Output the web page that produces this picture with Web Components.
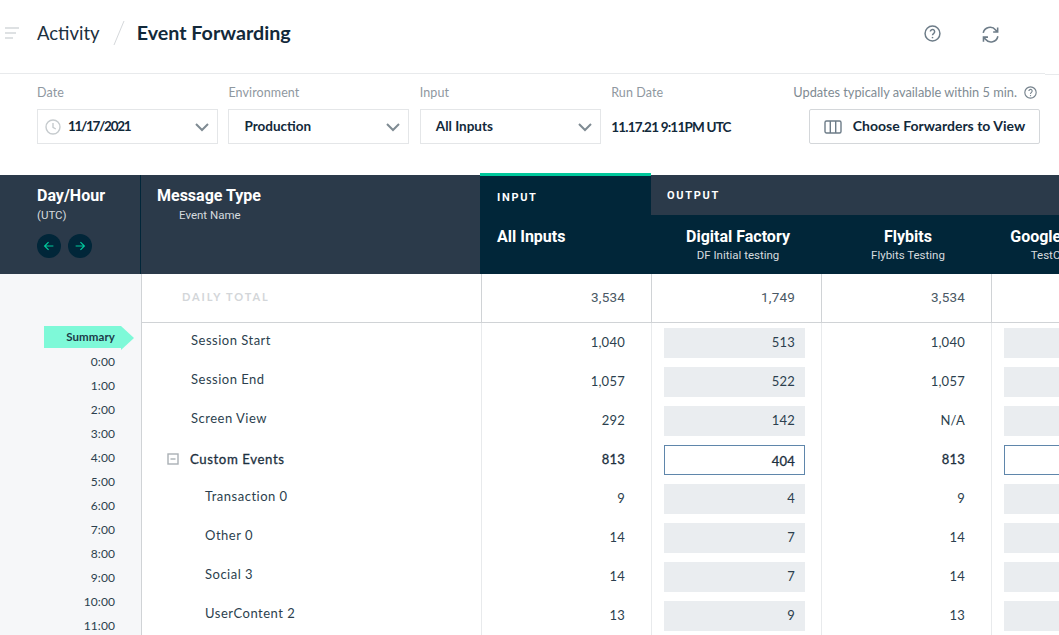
<!DOCTYPE html>
<html>
  <head>
    <style>
      html, body {
        margin: 0;
        height: 100%;
        overflow: hidden;
        background: #fff;
        color: #1c3040;
        font-family: "Lato", "Liberation Sans", sans-serif;
      }
    </style>
  </head>

  <body>
    <activity-page></activity-page>

    <script>
      // Small helper, every element has the same constructor shape
      const define = (name, html, onConnect) => {
        customElements.define(name, class extends HTMLElement {
          constructor() {
            super();
            this.attachShadow({ mode: "open" });
            this.shadowRoot.innerHTML = html;
          }
          connectedCallback() {
            if (onConnect) onConnect(this);
          }
        });
      };

      const ICONS = {
        menu: '<path d="M0 2h14M0 7h11M0 12h8" stroke-width="1.6"/>',
        help: '<circle cx="8" cy="8" r="7"/><path d="M6 6.2a2 2 0 1 1 3.2 1.6c-.8.6-1.2 1-1.2 1.9"/><path d="M8 11.2v1.3"/>',
        refresh: '<path d="M2 7a6.2 6.2 0 0 1 11-2.6l1.6 1.8M14.8 2.2v4h-4"/><path d="M15 10a6.2 6.2 0 0 1-11 2.6l-1.6-1.8M2.2 14.8v-4h4"/>',
        clock: '<circle cx="8" cy="8" r="7"/><path d="M8 4v4.4l2.8 1.6"/>',
        chevron: '<path d="M2 5l6 6 6-6" stroke-width="2"/>',
        columns: '<rect x="1" y="2" width="16" height="12" rx="1.5"/><path d="M6.3 2v12M11.7 2v12"/>',
        left: '<path d="M13 8H3M7.5 3.5L3 8l4.5 4.5"/>',
        right: '<path d="M3 8h10M8.5 3.5L13 8l-4.5 4.5"/>',
        minus: '<rect x="1" y="1" width="10" height="10"/><path d="M3.5 6h5"/>'
      };

      define("ui-icon", `
        <style>
          :host { display: inline-flex; line-height: 0; }
          svg { fill: none; stroke: currentColor; stroke-width: 1.4; width: 100%; height: 100%; }
        </style>
        <svg></svg>
      `, (el) => {
        const svg = el.shadowRoot.querySelector("svg");
        const size = el.getAttribute("box") || "0 0 16 16";
        svg.setAttribute("viewBox", size);
        svg.innerHTML = ICONS[el.getAttribute("name")];
      });

      define("top-bar", `
        <style>
          :host {
            position: relative;
            display: flex;
            align-items: center;
            height: 74px;
            box-sizing: border-box;
            padding-left: 5px;
            padding-bottom: 9px;
          }
          /* the rule steps down a little at the far right */
          :host::before, :host::after { content: ""; position: absolute; height: 1px; background: #e8eaec; }
          :host::before { left: 0; right: 14px; bottom: 0; }
          :host::after { right: 0; width: 14px; bottom: -1px; }
          .menu { width: 14px; height: 14px; color: #d3d7da; margin: 0 18px 0 0; }
          .crumb { font-size: 18.5px; color: #1c3040; }
          .slash { width: 12px; height: 26px; margin: 0 12px 0 13px; stroke: #d5d8db; fill: none; flex: none; }
          .title { font-size: 19.7px; font-weight: 700; color: #12293a; flex: 1; }
          .tool { width: 17px; height: 17px; color: #6d7c88; margin-top: 2px; }
          .help { margin-right: 40px; }
          .refresh { width: 18px; height: 18px; margin-right: 60px; }
        </style>
        <ui-icon class="menu" name="menu" box="0 0 14 14"></ui-icon>
        <span class="crumb">Activity</span>
        <svg class="slash" viewBox="0 0 12 26"><path d="M11 1L1 25"/></svg>
        <span class="title">Event Forwarding</span>
        <ui-icon class="tool help" name="help"></ui-icon>
        <ui-icon class="tool refresh" name="refresh"></ui-icon>
      `);

      define("filter-field", `
        <style>
          :host { display: flex; flex-direction: column; gap: 8px; width: 181px; }
          .label { font-size: 12.5px; line-height: 17px; color: #8f989f; letter-spacing: 0.1px; }
        </style>
        <span class="label"></span>
        <slot></slot>
      `, (el) => {
        el.shadowRoot.querySelector(".label").textContent = el.getAttribute("label");
      });

      define("select-box", `
        <style>
          :host {
            display: flex;
            align-items: center;
            height: 35px;
            box-sizing: border-box;
            border: 1px solid #e4e6e8;
            padding: 0 7px 0 15px;
            font-size: 13.5px;
            font-weight: 700;
            color: #12293a;
          }
          ::slotted(ui-icon) { width: 16px; height: 16px; color: #c6cbce; margin: 0 7px 0 -8px; }
          .text { flex: 1; padding-bottom: 2px; }
          .chev { width: 16px; height: 16px; color: #7f8b93; }
        </style>
        <slot name="icon"></slot>
        <span class="text"><slot></slot></span>
        <ui-icon class="chev" name="chevron"></ui-icon>
      `);

      define("forwarder-action", `
        <style>
          :host { display: flex; flex-direction: column; align-items: flex-end; gap: 8px; margin-left: auto; margin-right: 19px; }
          .hint { display: flex; align-items: center; gap: 7px; font-size: 12.8px; line-height: 16px; padding-bottom: 1px; color: #808b93; margin-right: 3px; }
          .hint ui-icon { width: 13px; height: 13px; color: #76838d; }
          .btn {
            display: flex;
            align-items: center;
            justify-content: center;
            gap: 11px;
            width: 231px;
            height: 35px;
            box-sizing: border-box;
            border: 1px solid #d4d7da;
            border-radius: 2px;
            padding-bottom: 2px;
            font-size: 14px;
            font-weight: 700;
            color: #12293a;
          }
          .btn ui-icon { width: 18px; height: 16px; color: #6d7c88; margin-top: 2px; }
        </style>
        <span class="hint">Updates typically available within 5 min. <ui-icon name="help"></ui-icon></span>
        <div class="btn"><ui-icon name="columns" box="0 0 18 16"></ui-icon>Choose Forwarders to View</div>
      `);

      define("filter-bar", `
        <style>
          :host {
            display: flex;
            gap: 10.4px;
            height: 101px;
            box-sizing: border-box;
            padding: 10px 0 0 37px;
          }
          .run { font-size: 13.5px; font-weight: 700; letter-spacing: -0.8px; color: #12293a; display: flex; align-items: center; height: 35px; white-space: nowrap; }
          filter-field.last { width: auto; }
          .date { letter-spacing: -1.3px; }
        </style>
        <filter-field label="Date"><select-box><ui-icon slot="icon" name="clock"></ui-icon><span class="date">11/17/2021</span></select-box></filter-field>
        <filter-field label="Environment"><select-box>Production</select-box></filter-field>
        <filter-field label="Input"><select-box>All Inputs</select-box></filter-field>
        <filter-field class="last" label="Run Date"><div class="run">11.17.21 9:11PM UTC</div></filter-field>
        <forwarder-action></forwarder-action>
      `);

      define("head-column", `
        <style>
          :host {
            display: flex;
            flex-direction: column;
            align-items: center;
            width: 170px;
            box-sizing: border-box;
            flex: none;
            padding: 12px 0 0 4px;
            font-family: "Roboto", sans-serif;
            color: #fff;
          }
          :host([wide]) { padding: 12px 10px 0 0; }
          .name { font-size: 16px; font-weight: 700; line-height: 20px; white-space: nowrap; }
          .sub { font-size: 11.5px; line-height: 18px; color: #d6dbdf; white-space: nowrap; margin-top: -1px; }
        </style>
        <span class="name"></span>
        <span class="sub"></span>
      `, (el) => {
        el.shadowRoot.querySelector(".name").textContent = el.getAttribute("name");
        el.shadowRoot.querySelector(".sub").textContent = el.getAttribute("sub");
      });

      define("table-head", `
        <style>
          :host {
            display: flex;
            height: 99px;
            background: #2b3a4a;
            font-family: "Roboto", sans-serif;
            color: #fff;
          }
          .day { box-sizing: border-box; padding: 11px 0 0 37px; border-right: 1px solid #012639; flex: none; width: 141px; }
          .msg { width: 339px; box-sizing: border-box; padding: 11px 0 0 16px; flex: none; }
          .big { font-size: 16px; font-weight: 700; line-height: 20px; }
          .small { font-size: 11.5px; line-height: 18px; color: #d6dbdf; }
          .event { padding-left: 22px; }
          .arrows { display: flex; gap: 7px; margin-top: 10px; }
          .arrows span { width: 24px; height: 24px; border-radius: 50%; background: #012639; display: flex; align-items: center; justify-content: center; }
          .arrows ui-icon { width: 14px; height: 14px; color: #00c89c; }
          .io { flex: 1; display: flex; flex-direction: column; min-width: 0; }
          .tabs { display: flex; height: 40px; flex: none; }
          .tab { font-size: 11px; font-weight: 700; letter-spacing: 1.7px; }
          .tab.in { width: 171px; box-sizing: border-box; background: #012639; border-top: 3px solid #00c89c; margin-top: -2px; padding: 15px 0 0 17px; height: 42px; }
          .tab.out { padding: 14px 0 0 16px; }
          .cols { flex: 1; display: flex; background: #012639; }
          .all { width: 171px; box-sizing: border-box; flex: none; padding: 11px 0 0 17px; }
          .all .big { margin-top: 1px; }
        </style>
        <div class="day">
          <div class="big">Day/Hour</div>
          <div class="small">(UTC)</div>
          <div class="arrows">
            <span><ui-icon name="left"></ui-icon></span>
            <span><ui-icon name="right"></ui-icon></span>
          </div>
        </div>
        <div class="msg">
          <div class="big">Message Type</div>
          <div class="small event">Event Name</div>
        </div>
        <div class="io">
          <div class="tabs">
            <div class="tab in">INPUT</div>
            <div class="tab out">OUTPUT</div>
          </div>
          <div class="cols">
            <div class="all"><div class="big">All Inputs</div></div>
            <head-column name="Digital Factory" sub="DF Initial testing"></head-column>
            <head-column name="Flybits" sub="Flybits Testing"></head-column>
            <head-column wide name="Google Analytics" sub="TestConnection"></head-column>
          </div>
        </div>
      `);

      define("time-rail", `
        <style>
          :host {
            display: flex;
            flex-direction: column;
            align-items: flex-end;
            width: 142px;
            box-sizing: border-box;
            flex: none;
            background: #f6f7f9;
            border-right: 1px solid #d0d3d6;
            padding: 52px 26px 0 0;
            font-size: 12px;
            letter-spacing: 0.1px;
            color: #2c3f4e;
          }
          .flag {
            position: relative;
            width: 77px;
            height: 24px;
            margin-right: -6px;
            padding-right: 6px;
            box-sizing: border-box;
            background: #7ef9d8;
            font-size: 11.5px;
            font-weight: 700;
            line-height: 22px;
            text-align: right;
            color: #1c3a48;
          }
          /* pennant point sticks out over the rail edge */
          .flag::after {
            content: "";
            position: absolute;
            left: 77px;
            top: 0;
            border-left: 13px solid #7ef9d8;
            border-top: 12px solid transparent;
            border-bottom: 12px solid transparent;
          }
          #hours { text-align: right; padding-top: 2px; }
          .hour { height: 24px; line-height: 24px; }
        </style>
        <div class="flag">Summary</div>
        <div id="hours"></div>
      `, (el) => {
        const box = el.shadowRoot.querySelector("#hours");
        box.innerHTML = Array.from({ length: 12 }, (_, i) => `<div class="hour">${i}:00</div>`).join("");
      });

      define("data-row", `
        <style>
          :host {
            display: grid;
            grid-template-columns: 339px repeat(4, 170px);
            height: 39px;
            font-size: 13px;
            color: #2c3f4e;
            letter-spacing: 0.25px;
          }
          :host([strong]) { color: #1c3040; -webkit-text-stroke: 0.3px currentColor; }
          .label { display: flex; align-items: center; gap: 11px; padding: 0 0 5px 49px; white-space: nowrap; letter-spacing: 0.5px; }
          :host([strong]) .label { padding: 0 0 2px 25px; font-size: 13.2px; letter-spacing: 0.6px; }
          :host([child]) .label { padding-left: 63px; }
          .label ui-icon { width: 12px; height: 12px; color: #aab0b5; }
          .cell { border-left: 1px solid #e8eaec; display: flex; align-items: center; justify-content: flex-end; padding: 0 26px 2px 0; box-sizing: border-box; }
          .chip { border-left: 1px solid #e8eaec; box-sizing: border-box; padding: 5px 16px 4px 12px; }
          .chip div { height: 30px; background: #eaedf0; display: flex; align-items: center; justify-content: flex-end; padding: 0 10px 2px 0; box-sizing: border-box; }
          :host([strong]) .chip div { background: #fff; border: 1px solid #5f86ab; padding: 1px 9px 0 0; }
        </style>
        <div class="label"></div>
        <div class="cell" id="input"></div>
        <div class="chip"><div id="df"></div></div>
        <div class="cell" id="fly"></div>
        <div class="chip"><div></div></div>
      `, (el) => {
        const root = el.shadowRoot;
        const label = root.querySelector(".label");
        label.textContent = el.getAttribute("label");
        if (el.hasAttribute("strong")) {
          const icon = document.createElement("ui-icon");
          icon.setAttribute("name", "minus");
          icon.setAttribute("box", "0 0 12 12");
          label.prepend(icon);
        }
        const [input, df, fly] = el.getAttribute("values").split("|");
        root.querySelector("#input").textContent = input;
        root.querySelector("#df").textContent = df;
        root.querySelector("#fly").textContent = fly;
      });

      define("total-row", `
        <style>
          :host {
            display: grid;
            grid-template-columns: 339px repeat(4, 170px);
            height: 49px;
            border-bottom: 1px solid #d0d3d6;
            box-sizing: border-box;
            font-family: "Roboto", sans-serif;
            font-size: 13.5px;
            letter-spacing: 0.2px;
            color: #4a5864;
          }
          .label { padding: 15px 0 0 40px; font-family: "Lato", sans-serif; font-size: 11px; line-height: 16px; font-weight: 700; letter-spacing: 1.9px; color: #d3d6d9; }
          .cell { border-left: 1px solid #d0d3d6; display: flex; align-items: center; justify-content: flex-end; padding: 0 26px 2px 0; }
        </style>
        <div class="label">DAILY TOTAL</div>
        <div class="cell">3,534</div>
        <div class="cell">1,749</div>
        <div class="cell">3,534</div>
        <div class="cell"></div>
      `);

      define("activity-page", `
        <style>
          :host { display: flex; flex-direction: column; height: 635px; overflow: hidden; }
          .body { display: flex; flex: 1; min-height: 0; }
          .rows { flex: 1; min-width: 0; overflow: hidden; }
        </style>
        <top-bar></top-bar>
        <filter-bar></filter-bar>
        <table-head></table-head>
        <div class="body">
          <time-rail></time-rail>
          <div class="rows">
            <total-row></total-row>
            <data-row label="Session Start" values="1,040|513|1,040"></data-row>
            <data-row label="Session End" values="1,057|522|1,057"></data-row>
            <data-row label="Screen View" values="292|142|N/A"></data-row>
            <data-row strong label="Custom Events" values="813|404|813"></data-row>
            <data-row child label="Transaction 0" values="9|4|9"></data-row>
            <data-row child label="Other 0" values="14|7|14"></data-row>
            <data-row child label="Social 3" values="14|7|14"></data-row>
            <data-row child label="UserContent 2" values="13|9|13"></data-row>
          </div>
        </div>
      `);
    </script>
  </body>
</html>
